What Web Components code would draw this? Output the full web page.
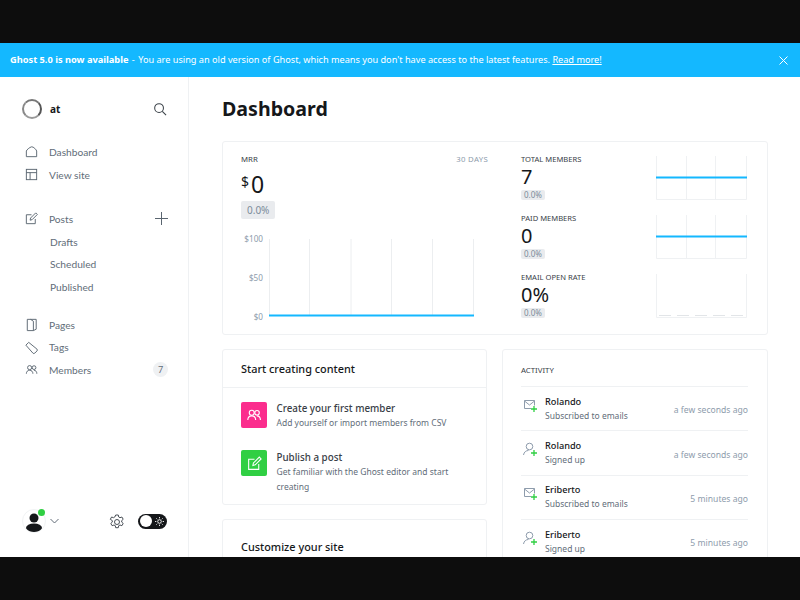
<!DOCTYPE html>
<html lang="en">
<head>
<meta charset="utf-8">
<title>Dashboard</title>
<style>
  html, body { margin: 0; height: 100%; background: #0d0d0d; overflow: hidden; }
  body { font-family: "Noto Sans", "Open Sans", sans-serif; color: #15171a; }
  .top, .bottom { height: 43px; }
  .app { display: flex; height: 480px; background: #fff; overflow: hidden; }
</style>
</head>
<body>
<div class="top"></div>
<gh-banner></gh-banner>
<div class="app">
  <gh-sidebar></gh-sidebar>
  <gh-dashboard></gh-dashboard>
</div>
<script>
const icons = {
  home: '<path d="M2.5 13.5V7.500C2.500 6.500 6 3.500 8 3s5.500 3.500 5.500 4.500v6z"/>',
  site: '<rect x="2.5" y="2.5" width="11" height="11"/><path d="M2.5 6h11M6.5 6v7.500"/>',
  post: '<path d="M12 8.500v5H2.500V4H8"/><path d="M6.500 9.800 7 7.500 12.500 2l1.700 1.700-5.500 5.500z"/>',
  pages: '<path d="M3.500 2.500h9.500v10.500L10 14.500H3.500z"/><path d="M10 14.500V4.500L7 2.500"/>',
  tag: '<path d="M2 5.500 5 2.500l8.800 7.200a1.400 1.400 0 0 1 0 2L11.500 14a1.400 1.400 0 0 1-2 0z"/>',
  members: '<circle cx="6" cy="6" r="2.200"/><circle cx="10.700" cy="6" r="2"/><path d="M2.500 12.500c0-2.200 1.400-3.700 3.500-3.700s3.500 1.500 3.500 3.700M10.500 8.800c2 0 3.200 1.500 3.200 3.700"/>'
};
const svg = (name, size) => `<svg width="${size}" height="${size}" viewBox="0 0 16 16" fill="none" stroke="currentColor" stroke-width="1">${icons[name]}</svg>`;

class GhBanner extends HTMLElement {
  connectedCallback() {
    this.attachShadow({ mode: 'open' });
    this.shadowRoot.innerHTML = `
      <style>
        :host { display: flex; align-items: center; box-sizing: border-box; height: 34px; padding: 0 12px 1px 10px; background: #14b8ff; color: #fff; font-size: 9.16px; }
        p { flex: 1; margin: 0; }
        b { font-weight: 700; font-size: 9.25px; margin-right: 1px; }
        i { font-style: normal; margin-right: 1px; }
        a { color: inherit; text-decoration: underline; }
        svg { display: block; margin-top: 1px; }
      </style>
      <p><b>Ghost 5.0 is now available</b> <i>-</i> You are using an old version of Ghost, which means you don't have access to the latest features. <a href="#">Read more!</a></p>
      <svg width="9" height="9" viewBox="0 0 9 9" stroke="#fff" stroke-width="1"><path d="M.5.5l8 8M8.5.5l-8 8"/></svg>
    `;
  }
}
customElements.define('gh-banner', GhBanner);

class NavItem extends HTMLElement {
  connectedCallback() {
    const icon = this.getAttribute('icon');
    this.attachShadow({ mode: 'open' });
    this.shadowRoot.innerHTML = `
      <style>
        :host { display: flex; align-items: center; height: 23px; color: #626d79; font-size: 10.2px; font-family: Lato, sans-serif; }
        :host([sub]) { padding-left: 28px; height: 22.5px; }
        :host([tight]) { height: 22.5px; }
        .ic { display: flex; width: 25px; margin-left: 2px; color: #5a6570; }
        .txt { flex: 1; }
      </style>
      ${icon ? `<span class="ic">${svg(icon, 15)}</span>` : ''}
      <span class="txt"><slot></slot></span>
      <slot name="end"></slot>
    `;
  }
}
customElements.define('nav-item', NavItem);

class GhSidebar extends HTMLElement {
  connectedCallback() {
    this.attachShadow({ mode: 'open' });
    this.shadowRoot.innerHTML = `
      <style>
        :host { display: flex; flex-direction: column; flex: none; box-sizing: border-box; width: 189px; padding: 22px 20px 24px 22px; border-right: 1px solid #eff1f3; }
        .head { display: flex; align-items: center; height: 20px; margin-bottom: 21px; }
        .head svg { margin-right: 1px; }
        .logo { box-sizing: border-box; width: 20px; height: 20px; border: 2px solid; border-color: #777 #555 #999 #888; border-radius: 50%; margin-right: 8px; }
        .name { flex: 1; font-size: 10px; font-weight: 700; color: #15171a; }
        .group { display: flex; flex-direction: column; margin-bottom: 21px; }
        .group.posts { margin-bottom: 15.6px; }
        .drafts { margin-top: .5px; }
        .badge { display: flex; align-items: center; justify-content: center; width: 15px; height: 15px; border-radius: 50%; background: #eff1f3; font-size: 9px; color: #626d79; }
        .foot { display: flex; align-items: center; margin-top: auto; }
        .avatar { position: relative; width: 22px; height: 22px; border-radius: 50%; border: 1px solid #f1f3f4; margin-right: 4px; overflow: hidden; flex: none; }
        .wrap { position: relative; display: flex; }
        .dot { position: absolute; left: 16px; top: 0; width: 7px; height: 7px; border-radius: 50%; background: #30cf43; }
        .gear { margin-left: auto; margin-right: 13px; margin-top: 1px; color: #394047; display: block; }
        .toggle { display: flex; align-items: center; justify-content: space-between; box-sizing: border-box; width: 29px; height: 15px; margin-right: 1px; padding: 0 3px 0 2px; border-radius: 8px; background: #15171a; }
        .knob { width: 12px; height: 12px; border-radius: 50%; background: #fff; }
      </style>
      <div class="head">
        <span class="logo"></span>
        <span class="name">at</span>
        <svg width="14" height="14" viewBox="0 0 15 15" fill="none" stroke="#394047" stroke-width="1.100"><circle cx="6.500" cy="6.500" r="4.700"/><path d="m10 10 4 4"/></svg>
      </div>
      <div class="group">
        <nav-item icon="home">Dashboard</nav-item>
        <nav-item icon="site">View site</nav-item>
      </div>
      <div class="group posts">
        <nav-item icon="post">Posts
          <svg slot="end" width="13" height="13" viewBox="0 0 13 13" stroke="#5a6570" stroke-width="1"><path d="M6.500 0v13M0 6.500h13"/></svg>
        </nav-item>
        <nav-item sub class="drafts">Drafts</nav-item>
        <nav-item sub>Scheduled</nav-item>
        <nav-item sub>Published</nav-item>
      </div>
      <div class="group">
        <nav-item tight icon="pages">Pages</nav-item>
        <nav-item tight icon="tag">Tags</nav-item>
        <nav-item tight icon="members">Members <span slot="end" class="badge">7</span></nav-item>
      </div>
      <div class="foot">
        <span class="wrap">
          <span class="avatar">
            <svg width="22" height="22" viewBox="0 0 22 22" fill="#15171a"><circle cx="11" cy="8" r="4.500"/><ellipse cx="11" cy="18" rx="8" ry="4.500"/></svg>
          </span>
          <span class="dot"></span>
        </span>
        <svg width="9" height="6" viewBox="0 0 9 6" fill="none" stroke="#626d79"><path d="m.5 1 4 4 4-4"/></svg>
        <svg class="gear" width="16" height="16" viewBox="0 0 16 16" fill="none" stroke="currentColor" stroke-width=".9"><circle cx="8" cy="8" r="2.500"/><path d="M6.700 1h2.600l.4 2 1.300.7 1.900-.7 1.300 2.300-1.500 1.300v1.500l1.500 1.300-1.300 2.300-1.900-.7-1.300.7-.4 2H6.700l-.4-2-1.300-.7-1.900.7-1.300-2.300 1.500-1.300V6.600L1.300 5.300 2.600 3l1.900.7 1.300-.7z"/></svg>
        <span class="toggle">
          <span class="knob"></span>
          <svg width="9" height="9" viewBox="0 0 10 10" fill="none" stroke="#fff" stroke-width="1"><circle cx="5" cy="5" r="2"/><path d="M5 0v1.500M5 8.500V10M0 5h1.500M8.500 5H10M1.500 1.500l1 1M7.500 7.500l1 1M1.500 8.500l1-1M7.500 2.500l1-1"/></svg>
        </span>
      </div>
    `;
  }
}
customElements.define('gh-sidebar', GhSidebar);

class GhCard extends HTMLElement {
  connectedCallback() {
    this.attachShadow({ mode: 'open' });
    this.shadowRoot.innerHTML = `
      <style>
        :host { display: block; box-sizing: border-box; background: #fff; border: 1px solid #eff1f3; border-radius: 3px; }
      </style>
      <slot></slot>
    `;
  }
}
customElements.define('gh-card', GhCard);

class StatRow extends HTMLElement {
  connectedCallback() {
    const kind = this.getAttribute('chart');
    const lines = kind === 'line'
      ? '<path d="M30.500 0v44M59.500 0v44" stroke="#eff1f3"/><path d="M0 21.500h91" stroke="#14b8ff" stroke-width="2"/>'
      : '<path d="M3 41.500h12M21 41.500h12M39 41.500h12M57 41.500h12M75 41.500h12" stroke="#e2e5e8"/>';
    this.attachShadow({ mode: 'open' });
    this.shadowRoot.innerHTML = `
      <style>
        :host { display: flex; height: 59px; }
        .l { flex: 1; }
        .t { font-size: 7.6px; line-height: 9px; color: #394047; text-transform: uppercase; height: 9px; }
        .v { font-size: 20px; line-height: 24px; color: #15171a; margin: 1px 0 1px; }
        .p { display: inline-block; vertical-align: top; padding: 0 3px; height: 10px; line-height: 10px; font-size: 8px; color: #7c8b9a; background: #e9ebee; border-radius: 2px; }
        svg { display: block; flex: none; margin-top: 1px; }
      </style>
      <div class="l">
        <div class="t">${this.getAttribute('label')}</div>
        <div class="v">${this.getAttribute('value')}</div>
        <div class="p">0.0%</div>
      </div>
      <svg width="91" height="44" viewBox="0 0 91 44" fill="none">
        <path d="M.5 0v43.500h90V0" stroke="#eff1f3"/>
        ${lines}
      </svg>
    `;
  }
}
customElements.define('stat-row', StatRow);

class MrrChart extends HTMLElement {
  connectedCallback() {
    this.attachShadow({ mode: 'open' });
    this.shadowRoot.innerHTML = `
      <style>
        :host { display: flex; height: 78px; color: #8e9cac; font-size: 8.2px; }
        .y { display: flex; flex-direction: column; justify-content: space-between; align-items: flex-end; width: 23px; margin: -5px 6px -5px 0; }
        .y span { line-height: 10px; }
        svg { display: block; }
      </style>
      <div class="y"><span>$100</span><span>$50</span><span>$0</span></div>
      <svg width="206" height="78" viewBox="0 0 206 78" fill="none" stroke="#eceef0">
        <path d="M.5 0v77M40.500 0v77M82 0v77M122.500 0v77M163.500 0v77M204.500 0v77"/>
        <path d="M0 76.500h205" stroke="#14b8ff" stroke-width="2"/>
      </svg>
    `;
  }
}
customElements.define('mrr-chart', MrrChart);

class ActivityRow extends HTMLElement {
  connectedCallback() {
    const mail = this.getAttribute('type') === 'mail';
    const glyph = mail
      ? '<path d="M8 10.500H1.500v-8h10v5"/><path d="m1.500 3 5 4 5-4"/>'
      : '<circle cx="6.500" cy="4.500" r="3.300"/><path d="M.5 13c.5-3 2.500-4.500 5-4.500"/>';
    this.attachShadow({ mode: 'open' });
    this.shadowRoot.innerHTML = `
      <style>
        :host { display: flex; align-items: center; height: 44.4px; box-sizing: border-box; border-top: 1px solid #eff1f3; }
        .ic { width: 24px; flex: none; margin-top: -6px; }
        .ic svg { display: block; margin-left: 2px; }
        .m { flex: 1; font-size: 8.5px; line-height: 14px; }
        .n { color: #15171a; font-weight: 500; font-size: 9.2px; }
        .s { color: #626d79; }
        .w { color: #8e9cac; font-size: 8.6px; margin-top: 3px; }
      </style>
      <div class="ic"><svg width="16" height="16" viewBox="0 0 16 16" fill="none" stroke="#8e9cac" stroke-width="1">${glyph}<path d="M11 8v6M8 11h6" stroke="#30cf43" stroke-width="1.300"/></svg></div>
      <div class="m"><div class="n">${this.getAttribute('name')}</div><div class="s">${this.getAttribute('what')}</div></div>
      <div class="w">${this.getAttribute('when')}</div>
    `;
  }
}
customElements.define('activity-row', ActivityRow);

class GhDashboard extends HTMLElement {
  connectedCallback() {
    this.attachShadow({ mode: 'open' });
    this.shadowRoot.innerHTML = `
      <style>
        :host { display: block; flex: 1; min-width: 0; padding: 17px 32px 0 33px; overflow: hidden; }
        h1 { margin: 0 0 17px; font-size: 19.6px; line-height: 30px; font-weight: 700; color: #15171a; }
        .metrics { display: flex; height: 194px; margin-bottom: 14px; }
        .inner { display: flex; width: 100%; }
        .left { width: 247px; padding: 13px 0 0 18px; margin-right: 33px; }
        .row { display: flex; justify-content: space-between; font-size: 7.8px; line-height: 9px; color: #394047; }
        .row span + span { color: #8e9cac; letter-spacing: .3px; }
        .big { font-size: 23px; line-height: 30px; margin-top: 5px; color: #15171a; }
        .big sup { font-size: 14px; line-height: 0; vertical-align: 6px; margin-right: 2px; }
        .pct { display: inline-block; vertical-align: top; padding: 0 6px; height: 18px; line-height: 18px; font-size: 10px; color: #7c8b9a; background: #e9ebee; border-radius: 2px; margin-top: 2px; }
        mrr-chart { margin-top: 18px; margin-left: -1px; }
        .right { flex: 1; padding: 13px 20px 0 0; }
        .grid { display: grid; grid-template-columns: 265px 266px; gap: 14px 15px; }
        .col { display: flex; flex-direction: column; gap: 14px; }
        h4 { margin: 0; padding: 0 18px; height: 37px; line-height: 37px; font-size: 10.9px; font-weight: 500; color: #15171a; border-bottom: 1px solid #eff1f3; }
        .custom { height: 80px; }
        .custom h4 { border: 0; padding-top: 8px; }
        .steps { padding: 14px 18px 9.5px; display: flex; flex-direction: column; gap: 19.5px; }
        .step { display: flex; gap: 9.5px; }
        .step + .step .tt { margin-top: 1px; }
        .tile { display: flex; align-items: center; justify-content: center; width: 26px; height: 26px; border-radius: 2px; flex: none; color: #fff; }
        .tt { font-size: 9.8px; line-height: 14px; font-weight: 500; color: #394047; }
        .ds { font-size: 8.5px; line-height: 14.6px; color: #626d79; }
        .act { padding: 16px 19px 0 18px; height: 260px; box-sizing: border-box; }
        .act .ttl { font-size: 7.8px; line-height: 9px; color: #394047; margin-bottom: 11px; }
      </style>
      <h1>Dashboard</h1>
      <gh-card class="metrics">
        <div class="inner">
          <div class="left">
            <div class="row"><span>MRR</span><span>30 DAYS</span></div>
            <div class="big"><sup>$</sup>0</div>
            <span class="pct">0.0%</span>
            <mrr-chart></mrr-chart>
          </div>
          <div class="right">
            <stat-row label="Total members" value="7" chart="line"></stat-row>
            <stat-row label="Paid members" value="0" chart="line"></stat-row>
            <stat-row label="Email open rate" value="0%" chart="bars"></stat-row>
          </div>
        </div>
      </gh-card>
      <div class="grid">
        <div class="col">
          <gh-card>
            <h4>Start creating content</h4>
            <div class="steps">
              <div class="step">
                <span class="tile" style="background:#fb2d8d">${svg('members', 18)}</span>
                <div><div class="tt">Create your first member</div><div class="ds">Add yourself or import members from CSV</div></div>
              </div>
              <div class="step">
                <span class="tile" style="background:#30cf43">${svg('post', 17)}</span>
                <div><div class="tt">Publish a post</div><div class="ds">Get familiar with the Ghost editor and start<br>creating</div></div>
              </div>
            </div>
          </gh-card>
          <gh-card class="custom"><h4>Customize your site</h4></gh-card>
        </div>
        <gh-card>
          <div class="act">
            <div class="ttl">ACTIVITY</div>
            <activity-row type="mail" name="Rolando" what="Subscribed to emails" when="a few seconds ago"></activity-row>
            <activity-row type="user" name="Rolando" what="Signed up" when="a few seconds ago"></activity-row>
            <activity-row type="mail" name="Eriberto" what="Subscribed to emails" when="5 minutes ago"></activity-row>
            <activity-row type="user" name="Eriberto" what="Signed up" when="5 minutes ago"></activity-row>
          </div>
        </gh-card>
      </div>
    `;
  }
}
customElements.define('gh-dashboard', GhDashboard);
</script>
<div class="bottom"></div>
</body>
</html>
